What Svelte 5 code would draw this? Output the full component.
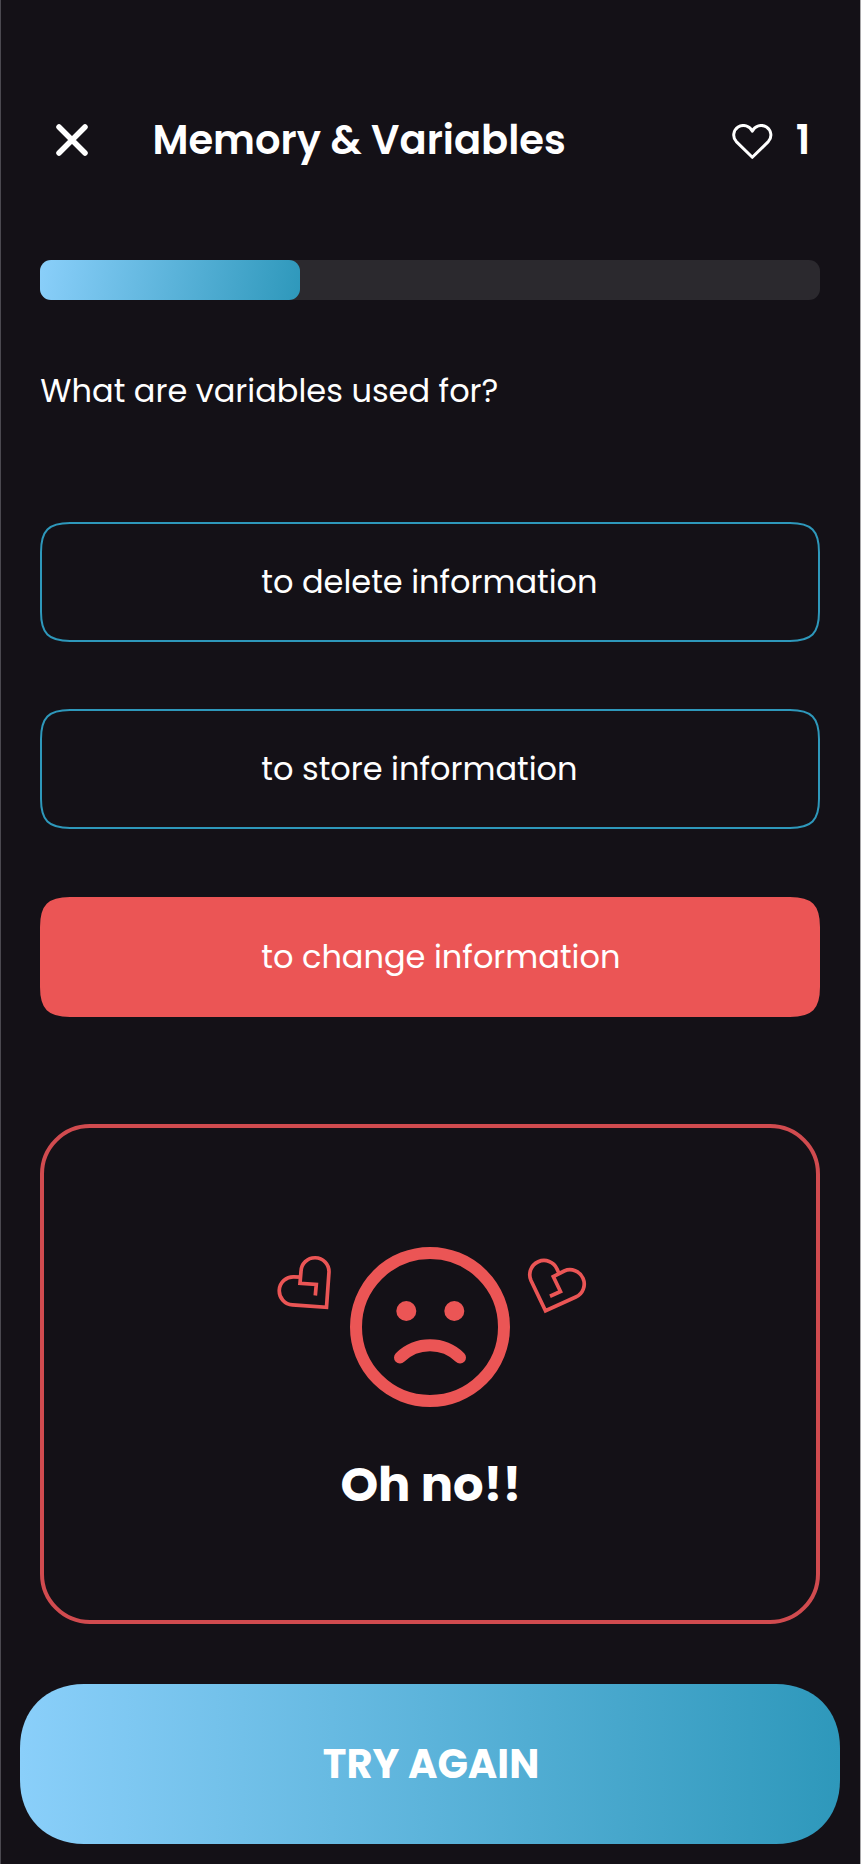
<script>
  const progress = 260 / 780;
  const options = [
    { text: 'to delete information' },
    { text: 'to store information' },
    { text: 'to change information', wrong: true }
  ];
</script>

<main class="screen">
  <header>
    <button class="close" aria-label="Close">
      <svg width="34" height="34" viewBox="0 0 34 34"><path d="M4 4 30 30M30 4 4 30" /></svg>
    </button>
    <h1>Memory &amp; Variables</h1>
    <div class="lives">
      <svg width="41" height="36" viewBox="0 0 41 36">
        <path d="M20.3 33.3 4.3 17.6A9.7 9.6 0 1 1 20.3 7.2 9.7 9.6 0 1 1 36.3 17.6Z" />
      </svg>
      <span>1</span>
    </div>
  </header>

  <div class="track"><div class="fill" style="width: {progress * 100}%"></div></div>

  <p class="question">What are variables used for?</p>

  <div class="options">
    {#each options as option}
      <button class="option" class:wrong={option.wrong}>
        <svg viewBox="0 0 780 120">
          <path d="M1 30C1 8.500 8.500 1 30 1H750C771.500 1 779 8.500 779 30V90C779 111.500 771.500 119 750 119H30C8.500 119 1 111.500 1 90Z" />
        </svg>
        <span>{option.text}</span>
      </button>
    {/each}
  </div>

  <section class="result">
    <svg width="320" height="164" viewBox="270 1245 320 164">
      <g fill="none" stroke="#eb5555">
        <circle cx="430" cy="1327" r="74" stroke-width="12" />
        <path d="M400 1357.500A43 43 0 0 1 460 1357.500" stroke-width="12" stroke-linecap="round" />
        <g stroke-width="3.700">
          <path d="M315.300 1295.500 316.300 1284.500 300 1283.300 301 1271.500A14 14 0 0 1 329 1272L326.500 1307.300 292.500 1304.800A14 14 0 0 1 294 1276.800L300.500 1277.200" />
          <path d="M550 1296.300 560.500 1291.500 553.300 1276.500 564.200 1271A14.200 14.200 0 0 1 575.800 1297L545.500 1310.800 531 1280.500A14.200 14.200 0 0 1 557 1268.900L559 1273.500" />
        </g>
      </g>
      <circle cx="406.300" cy="1311" r="10" fill="#eb5555" />
      <circle cx="454.300" cy="1311" r="10" fill="#eb5555" />
    </svg>
    <h2>Oh no!!</h2>
  </section>

  <button class="retry">
    <svg viewBox="0 0 820 160">
      <defs>
        <linearGradient id="retry-fill" gradientUnits="userSpaceOnUse" x1="0" y1="0" x2="820" y2="0">
          <stop offset="0" stop-color="#8acffa" />
          <stop offset="1" stop-color="#2e98bb" />
        </linearGradient>
      </defs>
      <path fill="url(#retry-fill)" d="M0 64C0 26 26 0 64 0H756C794 0 820 26 820 64V96C820 134 794 160 756 160H64C26 160 0 134 0 96Z" />
    </svg>
    <span>TRY AGAIN</span>
  </button>
</main>

<style>
  :global(body) {
    background: #141117;
  }
  .screen {
    box-sizing: border-box;
    width: 861px;
    height: 1864px;
    padding: 100px 39.700px 0 39.300px;
    border-left: 1px solid #4b4950;
    border-right: 1px solid #a9a8aa;
    background: #141117;
    color: #fff;
    font-family: Poppins, Inter, sans-serif;
    overflow: hidden;
  }
  button {
    padding: 0;
    border: 0;
    background: none;
    color: inherit;
    font: inherit;
  }
  svg {
    display: block;
  }
  header {
    display: flex;
    align-items: center;
    height: 80px;
    padding: 0 10px 0 15px;
  }
  .close path {
    stroke: #fff;
    stroke-width: 5.500;
    stroke-linecap: round;
  }
  h1,
  h2,
  p {
    margin: 0;
  }
  h1 {
    margin-left: 63.200px;
    font-size: 40px;
    font-weight: 600;
    line-height: 80px;
    white-space: nowrap;
  }
  .lives {
    display: flex;
    align-items: center;
    gap: 23px;
    margin-left: auto;
    font-size: 40px;
    font-weight: 600;
    line-height: 80px;
  }
  .lives svg {
    margin-top: 3px;
  }
  .lives path {
    fill: none;
    stroke: #fff;
    stroke-width: 3;
    stroke-linejoin: round;
  }
  .track {
    height: 40px;
    margin-top: 80px;
    border-radius: 11px;
    background: #2b292e;
  }
  .fill {
    height: 40px;
    border-radius: 11px;
    background: linear-gradient(100deg, #8acffa, #2e98bb);
  }
  .question {
    margin-top: 66px;
    font-size: 32px;
    line-height: 50px;
    white-space: nowrap;
  }
  .options {
    display: grid;
    gap: 67.300px;
    margin-top: 106px;
  }
  .option {
    display: grid;
    align-items: center;
    height: 120px;
    font-size: 32px;
    text-align: left;
  }
  .option > *,
  .retry > * {
    grid-area: 1 / 1;
  }
  .option span {
    padding-left: 221px;
    white-space: nowrap;
  }
  .option path {
    fill: none;
    stroke: #2e98bb;
    stroke-width: 2;
  }
  .wrong path {
    fill: #eb5555;
    stroke: #eb5555;
  }
  .result {
    box-sizing: border-box;
    display: flex;
    flex-direction: column;
    align-items: center;
    height: 500px;
    margin-top: 107.400px;
    padding-top: 117px;
    border: 4px solid #d14b4f;
    border-radius: 50px;
  }
  h2 {
    margin-top: 46px;
    padding-left: 1px;
    font-size: 48px;
    font-weight: 700;
    line-height: 60px;
  }
  .retry {
    display: grid;
    align-items: center;
    justify-items: center;
    width: 820px;
    height: 160px;
    margin: 60px 0 0 -20px;
    font-size: 40px;
    font-weight: 700;
  }
  .retry svg {
    width: 820px;
  }
  .retry span {
    padding-left: 1.500px;
  }
</style>
